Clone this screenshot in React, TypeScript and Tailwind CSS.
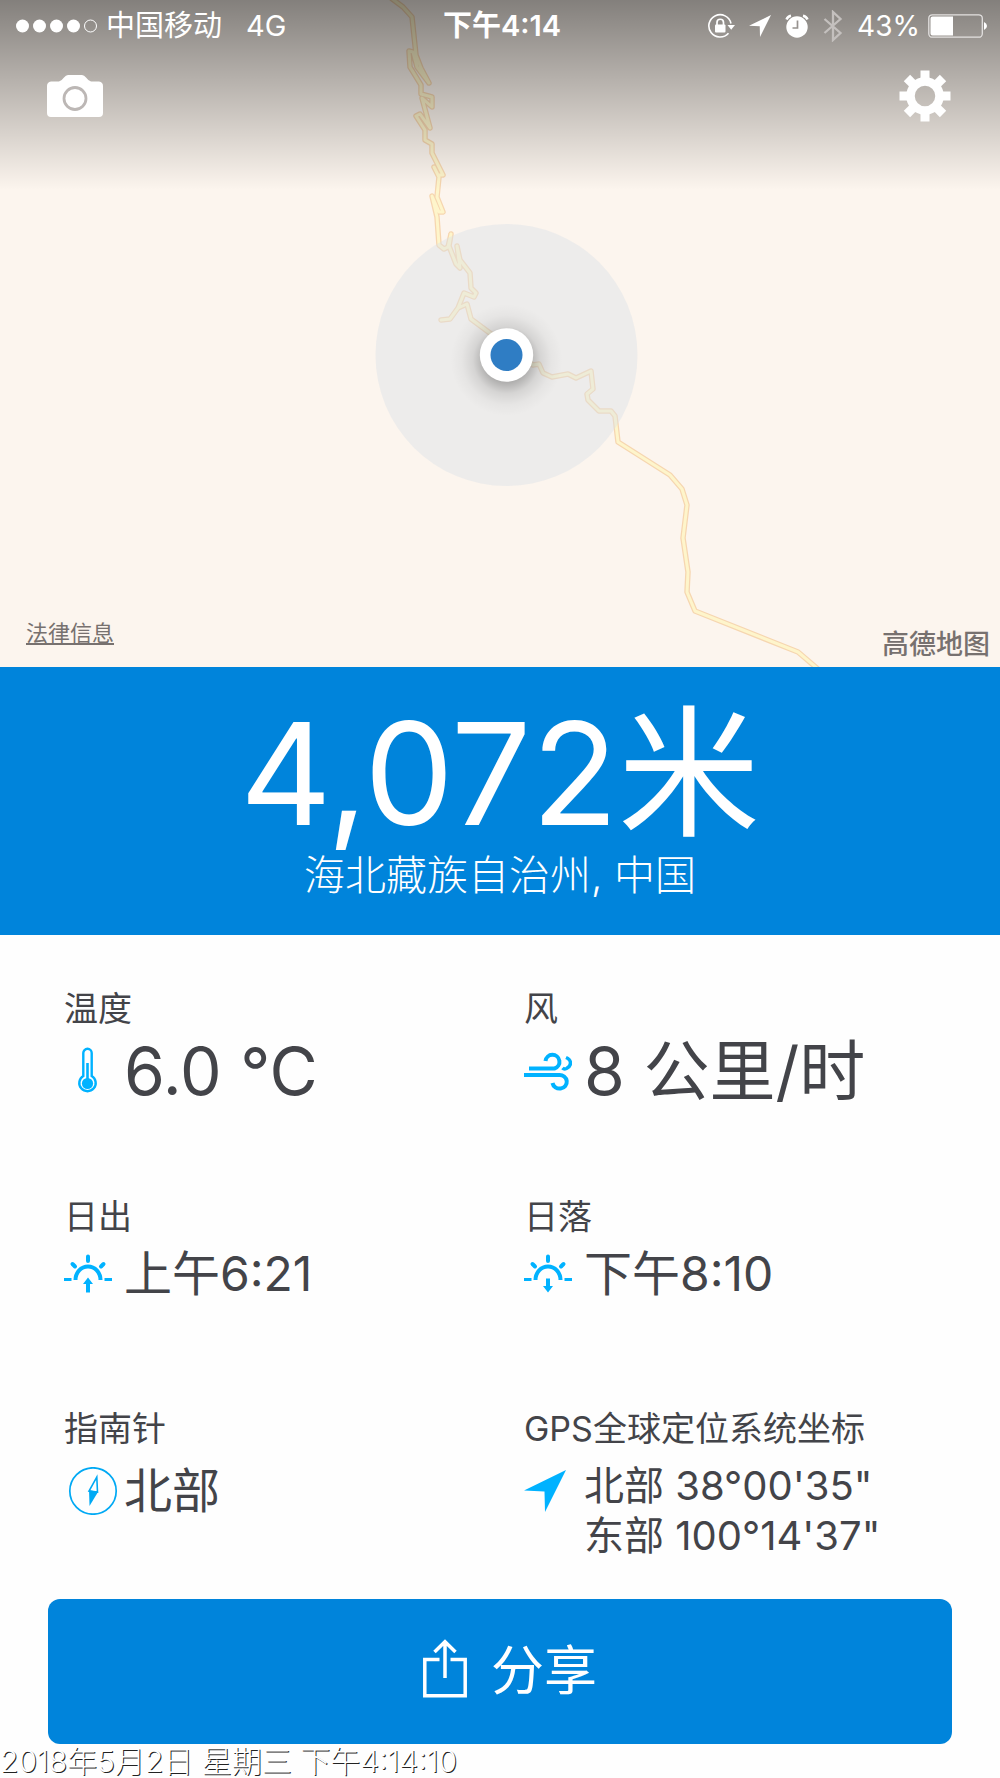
import React, { ReactNode } from 'react';

interface IMetric {
  label: string;
  lines: string[];
  icon: ReactNode;
  rowClass: string;
  textClass: string;
}

const ROAD =
  'M391 -2 L403 7 L412 17 L416 55 L421 68 L429 83 L417 67 L413 52 L409 51 L410 67 L421 85 L421 94 L432 97 L432 107 L422 98 L430 128 L420 114 L416 116 L425 130 L425 140 L432 144 L432 153 L443 175 L438 175 L434 167 L439 177 L437 197 L443 212 L439 212 L432 196 L437 217 L439 245 L444 249 L448 247 L451 234 L449 246 L456 264 L460 268 L457 246 L460 260 L470 273 L471 288 L476 293 L474 297 L464 293 L458 308 L450 319 L441 320 L450 319 L458 308 L467 304 L471 319 L506 345 L533 365 L539 364 L543 373 L552 377 L568 374 L576 378 L591 371 L593 389 L587 394 L588 400 L599 411 L611 411 L615 416 L618 442 L670 475 L682 489 L687 505 L683 538 L688 572 L687 592 L695 611 L798 652 L818 669';

const MapCanvas = () => (
  <svg
    className="absolute inset-0 h-full w-full"
    viewBox="0 0 1000 667"
    preserveAspectRatio="xMidYMid slice"
    aria-hidden="true"
  >
    <defs>
      <radialGradient id="markerShadow">
        <stop offset="0.4" stopColor="#000" stopOpacity="0.26" />
        <stop offset="0.6" stopColor="#000" stopOpacity="0.1" />
        <stop offset="0.8" stopColor="#000" stopOpacity="0.03" />
        <stop offset="1" stopColor="#000" stopOpacity="0" />
      </radialGradient>
    </defs>
    <g fill="none" strokeLinejoin="round">
      <path d={ROAD} stroke="#f6d6b0" strokeWidth="5.5" />
      <path d={ROAD} stroke="#fef5cb" strokeWidth="3" />
    </g>
    <circle cx="506.500" cy="355" r="131" fill="#d9e1e8" fillOpacity="0.42" />
    <circle cx="506.500" cy="360" r="56" fill="url(#markerShadow)" />
    <circle cx="506.500" cy="355" r="26.700" fill="#fff" />
    <circle cx="506.500" cy="355" r="16" fill="#2f7dc4" />
  </svg>
);

const SignalDots = () => (
  <svg className="h-4 w-[82px]" viewBox="0 0 82 16" fill="#fff" aria-hidden="true">
    <circle cx="6.500" cy="8" r="6.500" />
    <circle cx="23.500" cy="8" r="6.500" />
    <circle cx="40.500" cy="8" r="6.500" />
    <circle cx="57.500" cy="8" r="6.500" />
    <circle cx="74.500" cy="8" r="6" fill="none" stroke="#fff" />
  </svg>
);

const RotationLockIcon = () => (
  <svg className="h-7 w-7" viewBox="0 0 28 28" fill="none" aria-hidden="true">
    <path d="M21.500 21.200A11.200 11.200 0 1 1 24 11.500" stroke="#fff" strokeWidth="1.600" />
    <path d="M20.500 13H28L24.200 17.800Z" fill="#fff" />
    <rect x="8" y="12.500" width="10.500" height="8" rx="1" fill="#fff" />
    <path d="M10 13V10.500A3.250 3.250 0 0 1 16.500 10.500V13" stroke="#fff" strokeWidth="1.700" />
  </svg>
);

const ArrowIcon = ({ className }: { className: string }) => (
  <svg className={className} viewBox="0 0 42 42" fill="currentColor" aria-hidden="true">
    <path d="M42 0L21 42L20.500 21.500L0 20.500Z" />
  </svg>
);

const AlarmIcon = () => (
  <svg className="h-6 w-6" viewBox="0 0 24 24" fill="none" aria-hidden="true">
    <circle cx="12" cy="13" r="10.700" fill="#fff" />
    <path d="M1.500 5.500A6 6 0 0 1 6 1.800M22.500 5.500A6 6 0 0 0 18 1.800" stroke="#fff" strokeWidth="2.500" />
    <path d="M12.500 6.500V14H7.500" stroke="#97928f" strokeWidth="1.700" />
  </svg>
);

const BluetoothIcon = () => (
  <svg className="h-8 w-5" viewBox="0 0 20 32" fill="none" aria-hidden="true">
    <path d="M1.500 9L17.500 23L10 30V2L17.500 9L1.500 23" stroke="#c4c0be" strokeWidth="2.300" />
  </svg>
);

const BatteryIcon = () => (
  <svg className="h-6 w-[60px]" viewBox="0 0 60 24" fill="none" aria-hidden="true">
    <rect x="0.800" y="0.800" width="53.500" height="22.400" rx="3.500" stroke="#e3e1e0" strokeWidth="1.300" />
    <path d="M4.500 2.500H25V21.500H4.500A2 2 0 0 1 2.500 19.500V4.500A2 2 0 0 1 4.500 2.500Z" fill="#fff" />
    <path d="M56 8Q59 9.500 59 12T56 16Z" fill="#fff" />
  </svg>
);

const CameraIcon = () => (
  <svg className="h-11 w-[58px]" viewBox="0 0 58 44" fill="#fff" aria-hidden="true">
    <path d="M5 7.500H13Q15.500 7 17.500 4Q20 1 22 1H36Q38 1 40.500 4Q42.500 7 45 7.500H53Q57 8 57 12V39Q57 43 53 43H5Q1 43 1 39V12Q1 8 5 7.500Z" />
    <circle cx="29" cy="24.500" r="11" stroke="#bcb7b5" strokeWidth="2.800" />
  </svg>
);

const GearIcon = () => (
  <svg className="h-[52px] w-[52px]" viewBox="-26 -26 52 52" fill="#fff" aria-hidden="true">
    <circle r="14.500" fill="none" stroke="#fff" strokeWidth="8.500" />
    {[0, 45, 90, 135, 180, 225, 270, 315].map((angle) => (
      <rect key={angle} x="-4.500" y="-25.500" width="9" height="9" transform={`rotate(${angle})`} />
    ))}
  </svg>
);

const ThermometerIcon = () => (
  <svg className="h-12 w-12" viewBox="0 0 48 48" fill="none" stroke="#00b2ff" aria-hidden="true">
    <path d="M19.300 29V6A4.200 4.200 0 0 1 27.700 6V29A8.200 8.200 0 1 1 19.300 29Z" strokeWidth="2.400" />
    <path d="M23.500 16V34" strokeWidth="2.600" />
    <circle cx="23.500" cy="36.500" r="5.600" fill="#00b2ff" stroke="none" />
  </svg>
);

const WindIcon = () => (
  <svg className="h-12 w-12" viewBox="0 0 48 48" fill="none" stroke="#00b2ff" strokeWidth="4" aria-hidden="true">
    <path d="M5 21.500H30.500A7 7 0 1 0 21.500 14" />
    <path d="M0 28H35A7.200 6.800 0 1 1 28.500 36" />
    <path d="M42 10.500Q46.500 12.500 46.500 16T42.500 21.500Q40 22.500 38.500 21" strokeWidth="3.500" />
  </svg>
);

const SunIcon = ({ rising }: { rising: boolean }) => (
  <svg className="h-12 w-12" viewBox="0 0 48 48" fill="none" stroke="#00b2ff" strokeWidth="4" aria-hidden="true">
    <path d="M11.500 30A12.500 13.500 0 0 1 36.500 30" />
    <path d="M24 6.500V11M8.500 14L11 16.500M39.500 14L37 16.500" strokeLinecap="round" strokeWidth="4" />
    <path d="M0 29.500H7.500M40.500 29.500H48" strokeWidth="3" />
    <path
      d={rising ? 'M24 27.500L29 34H26V42.500H22V34H19Z' : 'M24 42.500L19 36H22V28.500H26V36H29Z'}
      fill="#00b2ff"
      stroke="none"
    />
  </svg>
);

const CompassIcon = () => (
  <svg className="h-12 w-[54px]" viewBox="0 0 54 48" fill="none" stroke="#00a9f4" aria-hidden="true">
    <circle cx="29" cy="24" r="23.200" strokeWidth="1.700" />
    <path d="M32.800 10L33.500 25L25 24Z" strokeWidth="1.600" />
    <path d="M25 23L34 25L25.500 39Z" fill="#00a9f4" stroke="none" />
  </svg>
);

const ShareIcon = () => (
  <svg className="h-[66px] w-11" viewBox="0 0 44 66" fill="none" stroke="#fff" strokeWidth="3.500" aria-hidden="true">
    <path d="M16.500 20.500H1.800V56.800H42.200V20.500H27.500" />
    <path d="M22 39V3M11.500 13L22 2.800L32.500 13" />
  </svg>
);

const metrics: IMetric[] = [
  {
    label: '温度',
    lines: ['6.0 °C'],
    icon: <ThermometerIcon />,
    rowClass: 'h-[76px]',
    textClass: 'text-[66px] leading-[76px]',
  },
  {
    label: '风',
    lines: ['8 公里/时'],
    icon: <WindIcon />,
    rowClass: 'h-[76px]',
    textClass: 'text-[66px] leading-[76px]',
  },
  {
    label: '日出',
    lines: ['上午6:21'],
    icon: <SunIcon rising />,
    rowClass: 'mb-3.5 h-[66px]',
    textClass: 'text-[48px] leading-[66px]',
  },
  {
    label: '日落',
    lines: ['下午8:10'],
    icon: <SunIcon rising={false} />,
    rowClass: 'mb-3.5 h-[66px]',
    textClass: 'text-[48px] leading-[66px]',
  },
  {
    label: '指南针',
    lines: ['北部'],
    icon: <CompassIcon />,
    rowClass: 'h-[76px]',
    textClass: 'text-[48px] leading-[76px]',
  },
  {
    label: 'GPS全球定位系统坐标',
    lines: ['北部 38°00\'35"', '东部 100°14\'37"'],
    icon: <ArrowIcon className="h-[42px] w-[42px] text-[#00b2ff]" />,
    rowClass: 'h-[76px]',
    textClass: 'pt-2 text-[40px] leading-[50px]',
  },
];

const Metric = ({ label, lines, icon, rowClass, textClass }: IMetric) => (
  <div>
    <dt className="mb-1 text-[34px] leading-10">{label}</dt>
    <dd className={`flex items-start ${rowClass}`}>
      <span className="flex h-full w-[60px] shrink-0 items-center">{icon}</span>
      <span className={`whitespace-nowrap ${textClass}`}>
        {lines.map((line) => (
          <span key={line} className="block">
            {line}
          </span>
        ))}
      </span>
    </dd>
  </div>
);

const App = () => (
  <main className="flex min-h-screen flex-col bg-[#fefefe] font-['Inter','Noto_Sans_CJK_SC',sans-serif] text-[#434449]">
    <header className="relative flex aspect-[1000/667] w-full flex-col bg-[#fcf5ee]">
      <MapCanvas />
      <div className="relative h-[190px] bg-linear-to-b from-[#000000]/48 to-[#000000]/0 text-white">
        <div className="grid h-[52px] grid-cols-[1fr_auto_1fr] items-center pr-3 pl-4 text-[29px]">
          <div className="flex items-center gap-2">
            <SignalDots />
            <span>中国移动</span>
            <span className="ml-4">4G</span>
          </div>
          <span className="font-semibold">下午4:14</span>
          <div className="flex items-center justify-end gap-3.5">
            <RotationLockIcon />
            <ArrowIcon className="h-[22px] w-[22px]" />
            <AlarmIcon />
            <BluetoothIcon />
            <div className="flex items-center gap-2 text-[28px]">
              <span>43%</span>
              <BatteryIcon />
            </div>
          </div>
        </div>
        <div className="flex items-center justify-between pt-[18px] pr-[49px] pl-[46px]">
          <button type="button" aria-label="相机">
            <CameraIcon />
          </button>
          <button type="button" aria-label="设置">
            <GearIcon />
          </button>
        </div>
      </div>
      <div className="relative mt-auto flex items-start justify-between pr-2.5 pb-1.5 pl-[26px] text-[#77716f]">
        <a href="#legal" className="text-[22px] leading-7 underline underline-offset-2">
          法律信息
        </a>
        <span className="pt-2.5 text-[27px] leading-8 font-medium">高德地图</span>
      </div>
    </header>

    <section className="bg-[#0084db] pt-[26px] pb-[38px] text-center text-white">
      <h1 className="text-[142px] leading-[160px]">4,072米</h1>
      <p className="text-[41px] leading-[44px] font-light">海北藏族自治州, 中国</p>
    </section>

    <dl className="grid grid-cols-2 gap-y-[88px] pt-[54px] pr-4 pl-16">
      {metrics.map((metric) => (
        <Metric key={metric.label} {...metric} />
      ))}
    </dl>

    <div className="px-12 pt-[70px]">
      <button
        type="button"
        className="flex h-[145px] w-full items-center justify-center gap-6 rounded-xl bg-[#0084db] pl-5 text-[53px] text-white"
      >
        <ShareIcon />
        <span>分享</span>
      </button>
    </div>
    <p className="text-[30px] leading-[34px] font-light text-white [text-shadow:1px_1px_0_#222]">
      2018年5月2日 星期三 下午4:14:10
    </p>
  </main>
);

export default App;
